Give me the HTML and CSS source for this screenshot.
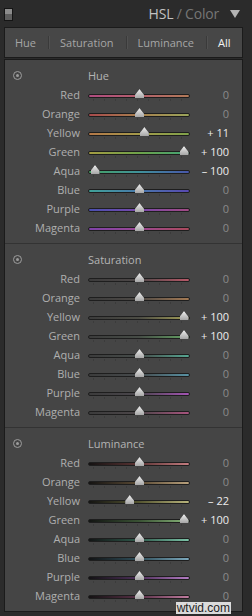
FILE: index.html
```html
<!DOCTYPE html>
<html lang="en">
<head>
    <meta charset="UTF-8">
    <meta name="viewport" content="width=device-width, initial-scale=1.0">
    <title>HSL / Color</title>
    <link rel="stylesheet" href="styles.css">
</head>
<body>
    <div class="header">
        <span class="panel-switch"></span>
        <div class="panel-title">
            <span class="title-on">HSL</span><span class="title-off">&nbsp;/ Color</span>
            <svg class="collapse" width="10" height="8" viewBox="0 0 10 8"><polygon points="0,0 10,0 5,8" fill="#b4b4b4"/></svg>
        </div>
    </div>

    <div class="tabs">
        <span class="tab">Hue</span>
        <span class="sep"></span>
        <span class="tab">Saturation</span>
        <span class="sep"></span>
        <span class="tab">Luminance</span>
        <span class="sep"></span>
        <span class="tab active">All</span>
    </div>

    <div class="panel">
        <!-- Hue -->
        <div class="section">
            <div class="section-head">
                <span class="target"></span>
                <span class="section-title">Hue</span>
            </div>
            <div class="row"><span class="label">Red</span><div class="slider"><div class="track hue-red"></div><span class="thumb" style="--v: 0"></span></div><span class="value">0</span></div>
            <div class="row"><span class="label">Orange</span><div class="slider"><div class="track hue-orange"></div><span class="thumb" style="--v: 0"></span></div><span class="value">0</span></div>
            <div class="row"><span class="label">Yellow</span><div class="slider"><div class="track hue-yellow"></div><span class="thumb" style="--v: 11"></span></div><span class="value changed">+ 11</span></div>
            <div class="row"><span class="label">Green</span><div class="slider"><div class="track hue-green"></div><span class="thumb" style="--v: 100"></span></div><span class="value changed">+ 100</span></div>
            <div class="row"><span class="label">Aqua</span><div class="slider"><div class="track hue-aqua"></div><span class="thumb" style="--v: -100"></span></div><span class="value changed">– 100</span></div>
            <div class="row"><span class="label">Blue</span><div class="slider"><div class="track hue-blue"></div><span class="thumb" style="--v: 0"></span></div><span class="value">0</span></div>
            <div class="row"><span class="label">Purple</span><div class="slider"><div class="track hue-purple"></div><span class="thumb" style="--v: 0"></span></div><span class="value">0</span></div>
            <div class="row"><span class="label">Magenta</span><div class="slider"><div class="track hue-magenta"></div><span class="thumb" style="--v: 0"></span></div><span class="value">0</span></div>
        </div>

        <!-- Saturation -->
        <div class="section">
            <div class="section-head">
                <span class="target"></span>
                <span class="section-title">Saturation</span>
            </div>
            <div class="row"><span class="label">Red</span><div class="slider"><div class="track sat-red"></div><span class="thumb" style="--v: 0"></span></div><span class="value">0</span></div>
            <div class="row"><span class="label">Orange</span><div class="slider"><div class="track sat-orange"></div><span class="thumb" style="--v: 0"></span></div><span class="value">0</span></div>
            <div class="row"><span class="label">Yellow</span><div class="slider"><div class="track sat-yellow"></div><span class="thumb" style="--v: 100"></span></div><span class="value changed">+ 100</span></div>
            <div class="row"><span class="label">Green</span><div class="slider"><div class="track sat-green"></div><span class="thumb" style="--v: 100"></span></div><span class="value changed">+ 100</span></div>
            <div class="row"><span class="label">Aqua</span><div class="slider"><div class="track sat-aqua"></div><span class="thumb" style="--v: 0"></span></div><span class="value">0</span></div>
            <div class="row"><span class="label">Blue</span><div class="slider"><div class="track sat-blue"></div><span class="thumb" style="--v: 0"></span></div><span class="value">0</span></div>
            <div class="row"><span class="label">Purple</span><div class="slider"><div class="track sat-purple"></div><span class="thumb" style="--v: 0"></span></div><span class="value">0</span></div>
            <div class="row"><span class="label">Magenta</span><div class="slider"><div class="track sat-magenta"></div><span class="thumb" style="--v: 0"></span></div><span class="value">0</span></div>
        </div>

        <!-- Luminance -->
        <div class="section">
            <div class="section-head">
                <span class="target"></span>
                <span class="section-title">Luminance</span>
            </div>
            <div class="row"><span class="label">Red</span><div class="slider"><div class="track lum-red"></div><span class="thumb" style="--v: 0"></span></div><span class="value">0</span></div>
            <div class="row"><span class="label">Orange</span><div class="slider"><div class="track lum-orange"></div><span class="thumb" style="--v: 0"></span></div><span class="value">0</span></div>
            <div class="row"><span class="label">Yellow</span><div class="slider"><div class="track lum-yellow"></div><span class="thumb" style="--v: -22"></span></div><span class="value changed">– 22</span></div>
            <div class="row"><span class="label">Green</span><div class="slider"><div class="track lum-green"></div><span class="thumb" style="--v: 100"></span></div><span class="value changed">+ 100</span></div>
            <div class="row"><span class="label">Aqua</span><div class="slider"><div class="track lum-aqua"></div><span class="thumb" style="--v: 0"></span></div><span class="value">0</span></div>
            <div class="row"><span class="label">Blue</span><div class="slider"><div class="track lum-blue"></div><span class="thumb" style="--v: 0"></span></div><span class="value">0</span></div>
            <div class="row"><span class="label">Purple</span><div class="slider"><div class="track lum-purple"></div><span class="thumb" style="--v: 0"></span></div><span class="value">0</span></div>
            <div class="row"><span class="label">Magenta</span><div class="slider"><div class="track lum-magenta"></div><span class="thumb" style="--v: 0"></span></div><span class="value">0</span></div>
        </div>
    </div>

    <span class="watermark">wtvid.com</span>
</body>
</html>
```

FILE: styles.css
```css
:root {
    --frame: #2b2b2b;
    --panel: #454545;
    --edge: #1b1b1b;
    --label: #afafaf;
    --muted: #8a8a8a;
    --bright: #ececec;
}

body {
    margin: 0;
    position: relative;
    width: 252px;
    height: 616px;
    overflow: hidden;
    background: var(--frame);
    font-family: 'Open Sans', 'DejaVu Sans', sans-serif;
    font-size: 11px;
    color: var(--label);
}

/* panel header */
.header {
    height: 27px;
    display: flex;
    justify-content: space-between;
    align-items: center;
    padding: 0 12px 0 4px;
}

.panel-switch {
    width: 7px;
    height: 11px;
    border: 1px solid #151515;
    background: linear-gradient(#8c8c8c 50%, #5e5e5e 50%);
    margin-top: 1px;
}

.panel-title {
    display: flex;
    align-items: center;
    font-size: 14px;
    letter-spacing: -0.2px;
}

.title-on {
    color: #c2c2c2;
}

.title-off {
    color: #767676;
}

.collapse {
    margin-left: 11px;
}

/* tab strip */
.tabs {
    height: 29px;
    margin: 0 9px 0 4px;
    border: 1px solid var(--edge);
    background: #474747;
    display: flex;
    align-items: center;
    padding-left: 10px;
}

.tab {
    color: #a6a6a6;
}

.tab.active {
    color: #f2f2f2;
}

.sep {
    width: 1px;
    height: 13px;
    margin: 0 11px 0 12px;
    background: #3a3a3a;
    box-shadow: 1px 0 0 #515151;
}

/* main panel */
.panel {
    margin: 1px 9px 0 4px;
    border: 1px solid var(--edge);
    background: var(--panel);
}

.section {
    padding: 6px 0;
    border-bottom: 1px solid #333;
}

.section:last-child {
    border-bottom: none;
}

.section-head,
.row {
    display: grid;
    grid-template-columns: 75px 102px 1fr;
    column-gap: 8px;
    height: 19px;
    line-height: 12px;
    align-items: center;
}

.target {
    position: relative;
    width: 7px;
    height: 7px;
    margin-left: 8px;
    border: 1px solid #9c9c9c;
    border-radius: 50%;
}

.target::after {
    content: "";
    position: absolute;
    left: 2px;
    top: 2px;
    width: 3px;
    height: 3px;
    border-radius: 50%;
    background: #9c9c9c;
}

.section-title {
    color: #b4b4b4;
}

.label {
    text-align: right;
}

.value {
    text-align: right;
    padding-right: 13px;
    color: var(--muted);
}

.value.changed {
    color: var(--bright);
}

/* sliders */
.slider {
    position: relative;
    height: 19px;
}

.slider::after {
    content: "";
    position: absolute;
    left: 5px;
    right: 5px;
    top: 14px;
    height: 2px;
    background: repeating-linear-gradient(90deg, #3b3b3b 0 1px, transparent 1px 11px);
}

.track {
    position: absolute;
    left: 0;
    right: 0;
    top: 9px;
    height: 2px;
    border: 1px solid #1e1e1e;
    border-radius: 3px;
}

.thumb {
    position: absolute;
    top: 4px;
    left: calc(7px + (var(--v) + 100) * 0.445px);
    width: 9px;
    height: 9px;
    margin-left: -4.5px;
    z-index: 1;
    filter: drop-shadow(0 0 0.6px #111);
}

.thumb::before {
    content: "";
    position: absolute;
    inset: 0;
    background: linear-gradient(#f0f0f0, #a6a6a6);
    clip-path: polygon(50% 0, 80% 40%, 100% 65%, 100% 100%, 0 100%, 0 65%, 20% 40%);
}

/* hue tracks */
.hue-red { background: linear-gradient(90deg, #b04c80, #b4606c 50%, #b27a58); }
.hue-orange { background: linear-gradient(90deg, #a84a4c, #a8804e 50%, #9aa45a); }
.hue-yellow { background: linear-gradient(90deg, #b47848, #a49a4a 50%, #80a24a); }
.hue-green { background: linear-gradient(90deg, #a49c42, #6ea24a 50%, #40a276); }
.hue-aqua { background: linear-gradient(90deg, #46a264, #40929a 50%, #4856aa); }
.hue-blue { background: linear-gradient(90deg, #40a298, #4878aa 50%, #5848b0); }
.hue-purple { background: linear-gradient(90deg, #4a50b0, #7848aa 50%, #a24a84); }
.hue-magenta { background: linear-gradient(90deg, #7e42a8, #9a4892 50%, #aa4a5c); }

/* saturation tracks */
.sat-red { background: linear-gradient(90deg, #3c3c3c, #4e4848 50%, #b85868); }
.sat-orange { background: linear-gradient(90deg, #3c3c3c, #4e4a46 50%, #a47a54); }
.sat-yellow { background: linear-gradient(90deg, #3c3c3c, #4c4c44 50%, #a4a058); }
.sat-green { background: linear-gradient(90deg, #3c3c3c, #464c46 50%, #64a464); }
.sat-aqua { background: linear-gradient(90deg, #3c3c3c, #464c4a 50%, #56a692); }
.sat-blue { background: linear-gradient(90deg, #3c3c3c, #464a4c 50%, #5892a4); }
.sat-purple { background: linear-gradient(90deg, #3c3c3c, #4a464c 50%, #a454b4); }
.sat-magenta { background: linear-gradient(90deg, #3c3c3c, #4c4649 50%, #a8547e); }

/* luminance tracks */
.lum-red { background: linear-gradient(90deg, #141212, #5c3434 50%, #c47c80); }
.lum-orange { background: linear-gradient(90deg, #141312, #5a4a34 50%, #b8a07c); }
.lum-yellow { background: linear-gradient(90deg, #141412, #545430 50%, #b8b47c); }
.lum-green { background: linear-gradient(90deg, #121412, #3a5234 50%, #8ab87c); }
.lum-aqua { background: linear-gradient(90deg, #121414, #305a4c 50%, #7cc4a8); }
.lum-blue { background: linear-gradient(90deg, #121314, #30505c 50%, #7ca8bc); }
.lum-purple { background: linear-gradient(90deg, #131214, #4e305a 50%, #b47cc4); }
.lum-magenta { background: linear-gradient(90deg, #141213, #583046 50%, #c07ca0); }

.watermark {
    position: absolute;
    right: 21px;
    bottom: 2px;
    padding: 0 1px;
    background: rgba(236, 236, 236, 0.9);
    color: #1e1e1e;
    font-family: 'Liberation Sans', sans-serif;
    font-size: 12px;
    line-height: 12px;
}
```
